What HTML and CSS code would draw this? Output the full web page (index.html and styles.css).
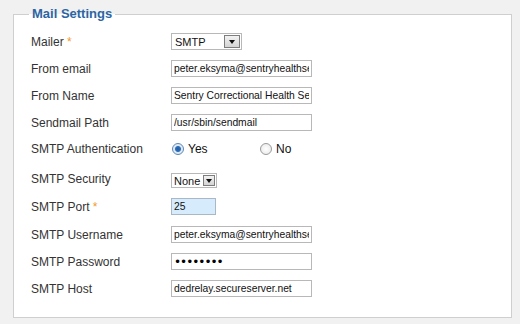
FILE: index.html
```html
<!DOCTYPE html>
<html lang="en">
<head>
  <meta charset="UTF-8" />
  <title>Mail Settings</title>
  <link rel="stylesheet" href="styles.css">
</head>
<body>
<form class="settings">
  <fieldset class="panel">
    <legend>Mail Settings</legend>

    <div class="row">
      <label>Mailer <span class="req">*</span></label>
      <span class="select wide"><span class="select-text">SMTP</span><span class="select-btn"></span></span>
    </div>

    <div class="row">
      <label for="from-email">From email</label>
      <input type="text" id="from-email" value="peter.eksyma@sentryhealthservices.com" />
    </div>

    <div class="row">
      <label for="from-name">From Name</label>
      <input type="text" id="from-name" value="Sentry Correctional Health Services" />
    </div>

    <div class="row row-path">
      <label for="sendmail">Sendmail Path</label>
      <input type="text" id="sendmail" value="/usr/sbin/sendmail" />
    </div>

    <div class="row row-auth">
      <label>SMTP Authentication</label>
      <div class="radios">
        <label class="option"><input type="radio" name="auth" checked /> Yes</label>
        <label class="option"><input type="radio" name="auth" /> No</label>
      </div>
    </div>

    <div class="row row-security">
      <label>SMTP Security</label>
      <span class="select narrow"><span class="select-text">None</span><span class="select-btn"></span></span>
    </div>

    <div class="row row-port">
      <label for="port">SMTP Port <span class="req">*</span></label>
      <input type="text" id="port" class="short focused" value="25" />
    </div>

    <div class="row">
      <label for="user">SMTP Username</label>
      <input type="text" id="user" value="peter.eksyma@sentryhealthservices.com" />
    </div>

    <div class="row">
      <label for="pass">SMTP Password</label>
      <input type="password" id="pass" value="12345678" />
    </div>

    <div class="row last">
      <label for="host">SMTP Host</label>
      <input type="text" id="host" value="dedrelay.secureserver.net" />
    </div>
  </fieldset>
</form>
</body>
</html>
```

FILE: styles.css
```css
* { box-sizing: border-box; }
body {
  margin: 0;
  background: #f1f1f1;
  font-family: 'Liberation Sans', Arial, sans-serif;
  color: #333;
}
.panel {
  margin: 6px 8px 0 13px;
  width: 499px;
  height: 312px;
  padding: 11px 0 0 17px;
  border: 1px solid #cfcfcf;
  background: #fff;
}
.panel legend {
  margin-left: -2px;
  padding: 0 3px;
  font-size: 13px;
  font-weight: bold;
  line-height: 16px;
  color: #2c65a3;
}
.row {
  display: flex;
  align-items: center;
  height: 17px;
  margin-bottom: 10px;
}
.row-path { margin-bottom: 9px; }
.row-auth { height: 18px; margin-bottom: 14px; }
.row-security { margin-bottom: 9px; }
.row-security > label { margin-top: -3px; }
.row-port { margin-bottom: 11px; }
.row.last { margin-bottom: 0; }

.row > label {
  width: 140px;
  font-size: 12px;
  flex-shrink: 0;
}
.req { color: #f39a2b; }

input[type="text"],
input[type="password"] {
  width: 141px;
  height: 17px;
  margin: 0;
  padding: 0 2px;
  border: 1px solid #b8b8b8;
  background: #fff;
  font-family: 'Liberation Sans', Arial, sans-serif;
  font-size: 10.3px;
  color: #111;
  outline: none;
}
input[type="password"] {
  font-family: 'DejaVu Sans', sans-serif;
  font-size: 12px;
  letter-spacing: -1px;
  color: #000;
}
input.short { width: 45px; }
input.focused { background: #d6ebfc; border-color: #a9b8c6; }

.select {
  display: flex;
  align-items: center;
  justify-content: space-between;
  height: 17px;
  padding: 0 1px 0 3px;
  border: 1px solid #b8b8b8;
  background: #fff;
  font-size: 11px;
  color: #111;
}
.select.wide { width: 71px; }
.select.narrow {
  width: 46px;
  height: 15px;
  padding-left: 2px;
}
.select-btn {
  position: relative;
  width: 16px;
  height: 13px;
  border: 1px solid #7d7d7d;
  background: linear-gradient(#f2f2f2, #d4d4d4);
}
.narrow .select-btn {
  width: 12px;
  height: 11px;
}
.select-btn::after {
  content: "";
  position: absolute;
  left: 4px;
  top: 4px;
  border-left: 3px solid transparent;
  border-right: 3px solid transparent;
  border-top: 4px solid #111;
}
.narrow .select-btn::after {
  left: 2px;
  top: 3px;
}

.radios {
  display: flex;
  font-size: 12px;
}
.option {
  display: flex;
  align-items: center;
  gap: 4px;
  width: 88px;
  color: #111;
}
.option input {
  appearance: none;
  width: 12px;
  height: 12px;
  margin: 0 0 0 1px;
  border: 1px solid #9a9a9a;
  border-radius: 50%;
  background: radial-gradient(circle, #fff 0, #e6e6e6 100%);
}
.option input:checked {
  border-color: #5d86b4;
  background: radial-gradient(circle, #1d5aa0 0, #2f6fb8 2.5px, #dbe8f5 3.5px, #f3f3f3 100%);
}
```
